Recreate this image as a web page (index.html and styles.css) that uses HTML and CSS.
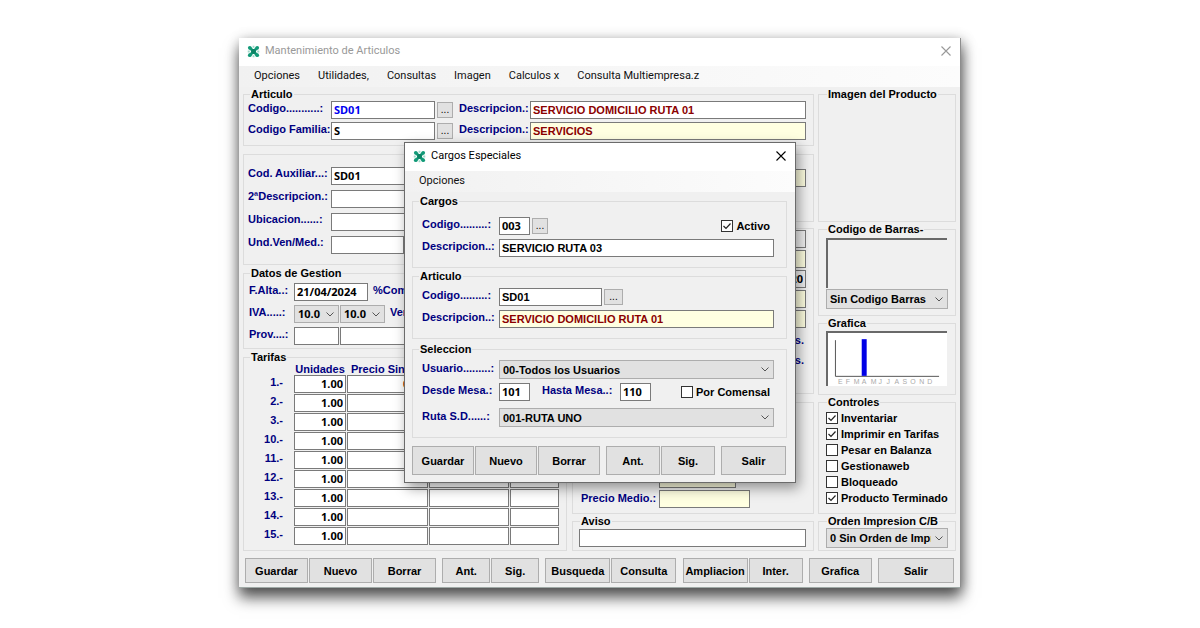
FILE: index.html
```html
<!DOCTYPE html>
<html lang="es">
<head>
<meta charset="utf-8">
<title>Mantenimiento de Articulos</title>
<link rel="stylesheet" href="styles.css">
</head>
<body>
<svg width="0" height="0" class="defs" aria-hidden="true">
  <symbol id="logo" viewBox="0 0 14 14">
    <path d="M3 3L11 11M11 3L3 11" stroke="#129a78" stroke-width="3"/>
    <path d="M7 0.8V3M7 11V13.2M0.8 7H3M11 7H13.2" stroke="#9fd9c9" stroke-width="2"/>
    <circle cx="3" cy="3" r="2" fill="#129a78"/><circle cx="11" cy="3" r="2" fill="#129a78"/>
    <circle cx="3" cy="11" r="2" fill="#129a78"/><circle cx="11" cy="11" r="2" fill="#129a78"/>
    <circle cx="7" cy="7" r="2.6" fill="#0c8264"/>
  </symbol>
  <symbol id="close" viewBox="0 0 10 10">
    <path d="M0.5 0.5L9.5 9.5M9.5 0.5L0.5 9.5" stroke="currentColor" stroke-width="1.1" fill="none"/>
  </symbol>
</svg>
<main class="window">
  <header class="titlebar inactive">
    <svg class="logo"><use href="#logo"/></svg>
    <h1>Mantenimiento de Articulos</h1>
    <button class="close" aria-label="Cerrar"><svg><use href="#close"/></svg></button>
  </header>
  <nav class="menu">
    <a href="#">Opciones</a><a href="#">Utilidades,</a><a href="#">Consultas</a><a href="#">Imagen</a><a href="#">Calculos x</a><a href="#">Consulta Multiempresa.z</a>
  </nav>
  <div class="content">
    <div class="center">
      <fieldset class="article">
        <legend>Articulo</legend>
        <label for="cod">Codigo...........:</label><input class="code blue" id="cod" value="SD01"><button class="more">...</button><label for="desc">Descripcion.:</label><input class="red" id="desc" value="SERVICIO DOMICILIO RUTA 01">
        <label for="fam">Codigo Familia:</label><input class="code" id="fam" value="S"><button class="more">...</button><label for="fdesc">Descripcion.:</label><input class="red yellow" id="fdesc" value="SERVICIOS">
      </fieldset>
      <div class="halves">
        <div class="stack">
          <fieldset class="aux">
            <label for="aux">Cod. Auxiliar...:</label><input class="code" id="aux" value="SD01">
            <label for="d2">2ªDescripcion.:</label><input id="d2">
            <label for="ubi">Ubicacion......:</label><input id="ubi">
            <label for="und">Und.Ven/Med.:</label><span class="pair"><input id="und"><input aria-label="Medida"></span>
          </fieldset>
          <fieldset class="gestion">
            <legend>Datos de Gestion</legend>
            <div class="line"><label for="alta">F.Alta..:</label><input class="code date" id="alta" value="21/04/2024"><label class="next">%Comi</label></div>
            <div class="line"><label for="iva">IVA.....:</label><select class="code iva" id="iva"><option>10.0</option></select><select class="code iva" aria-label="IVA 2"><option>10.0</option></select><label class="next">Ver</label></div>
            <div class="line"><label for="prov">Prov....:</label><input class="short" id="prov"><input class="grow" aria-label="Proveedor"></div>
          </fieldset>
          <fieldset class="tarifas">
            <legend>Tarifas</legend>
            <table>
              <colgroup><col class="c0"><col class="c1"><col class="c2"><col class="c3"><col class="c4"></colgroup>
              <thead><tr><th></th><th>Unidades</th><th class="start">Precio Sin</th><th></th><th></th></tr></thead>
              <tbody>
                <tr><th>1.-</th><td><input aria-label="Unidades 1" value="1.00"></td><td><input aria-label="Precio 1" class="price" value="0.00"></td><td><input aria-label="PVP 1"></td><td><input aria-label="Dto 1"></td></tr>
                <tr><th>2.-</th><td><input aria-label="Unidades 2" value="1.00"></td><td><input aria-label="Precio 2"></td><td><input aria-label="PVP 2"></td><td><input aria-label="Dto 2"></td></tr>
                <tr><th>3.-</th><td><input aria-label="Unidades 3" value="1.00"></td><td><input aria-label="Precio 3"></td><td><input aria-label="PVP 3"></td><td><input aria-label="Dto 3"></td></tr>
                <tr><th>10.-</th><td><input aria-label="Unidades 10" value="1.00"></td><td><input aria-label="Precio 10"></td><td><input aria-label="PVP 10"></td><td><input aria-label="Dto 10"></td></tr>
                <tr><th>11.-</th><td><input aria-label="Unidades 11" value="1.00"></td><td><input aria-label="Precio 11"></td><td><input aria-label="PVP 11"></td><td><input aria-label="Dto 11"></td></tr>
                <tr><th>12.-</th><td><input aria-label="Unidades 12" value="1.00"></td><td><input aria-label="Precio 12"></td><td><input aria-label="PVP 12"></td><td><input aria-label="Dto 12"></td></tr>
                <tr><th>13.-</th><td><input aria-label="Unidades 13" value="1.00"></td><td><input aria-label="Precio 13"></td><td><input aria-label="PVP 13"></td><td><input aria-label="Dto 13"></td></tr>
                <tr><th>14.-</th><td><input aria-label="Unidades 14" value="1.00"></td><td><input aria-label="Precio 14"></td><td><input aria-label="PVP 14"></td><td><input aria-label="Dto 14"></td></tr>
                <tr><th>15.-</th><td><input aria-label="Unidades 15" value="1.00"></td><td><input aria-label="Precio 15"></td><td><input aria-label="PVP 15"></td><td><input aria-label="Dto 15"></td></tr>
              </tbody>
            </table>
          </fieldset>
        </div>
        <div class="stack">
          <fieldset class="stock-top"><input class="yellow" aria-label="Total"></fieldset>
          <fieldset class="stock">
            <input class="plain" aria-label="Stock 1"><input class="yellow" aria-label="Stock 2"><input class="plain code end" aria-label="Stock 3" value="20"><input class="yellow" aria-label="Stock 4"><input class="yellow" aria-label="Stock 5">
            <span>Uds.</span><span>Uds.</span>
          </fieldset>
          <fieldset class="medio">
            <label for="ult">Ultima:</label><input class="yellow code ult" id="ult" value="21/04/2022">
            <label for="pm">Precio Medio.:</label><input class="yellow" id="pm">
          </fieldset>
          <fieldset class="aviso"><legend>Aviso</legend><input aria-label="Aviso"></fieldset>
        </div>
      </div>
    </div>
    <aside class="side">
      <fieldset class="image"><legend>Imagen del Producto</legend></fieldset>
      <fieldset class="barcode"><legend>Codigo de Barras-</legend>
        <div class="sunken"></div>
        <select aria-label="Codigo de Barras"><option>Sin Codigo Barras</option></select>
      </fieldset>
      <fieldset class="chart"><legend>Grafica</legend>
        <div class="sunken white">
          <svg viewBox="0 0 120 53" role="img" aria-label="Ventas por mes">
            <path d="M7.5 7V43.5H112" fill="none" stroke="#555"/>
            <rect x="34" y="6" width="5" height="37" fill="#0000e6"/>
            <g class="months"><text x="10">E</text><text x="18">F</text><text x="26">M</text><text x="34">A</text><text x="43">M</text><text x="51">J</text><text x="59">J</text><text x="67">A</text><text x="75">S</text><text x="83">O</text><text x="92">N</text><text x="100">D</text></g>
          </svg>
        </div>
      </fieldset>
      <fieldset class="controls"><legend>Controles</legend>
        <label><input type="checkbox" checked>Inventariar</label>
        <label><input type="checkbox" checked>Imprimir en Tarifas</label>
        <label><input type="checkbox">Pesar en Balanza</label>
        <label><input type="checkbox">Gestionaweb</label>
        <label><input type="checkbox">Bloqueado</label>
        <label><input type="checkbox" checked>Producto Terminado</label>
      </fieldset>
      <fieldset class="order"><legend>Orden Impresion C/B</legend>
        <select aria-label="Orden Impresion"><option>0 Sin Orden de Impresion</option></select>
      </fieldset>
    </aside>
  </div>
  <footer class="actions">
    <div><button class="w63">Guardar</button><button class="w63">Nuevo</button><button class="w63">Borrar</button></div>
    <div><button class="w48">Ant.</button><button class="w48">Sig.</button></div>
    <div><button class="w65">Busqueda</button><button class="w65">Consulta</button></div>
    <div><button class="w65">Ampliacion</button><button class="w54">Inter.</button></div>
    <div><button class="w63">Grafica</button></div>
    <div><button class="w76">Salir</button></div>
  </footer>

  <section class="dialog" role="dialog" aria-labelledby="dlg">
    <header class="titlebar">
      <svg class="logo"><use href="#logo"/></svg>
      <h2 id="dlg">Cargos Especiales</h2>
      <button class="close" aria-label="Cerrar"><svg><use href="#close"/></svg></button>
    </header>
    <nav class="menu"><a href="#">Opciones</a></nav>
    <div class="dialog-body">
      <fieldset class="cargos"><legend>Cargos</legend>
        <div class="line"><label for="cc">Codigo.........:</label><input class="code tiny" id="cc" value="003"><button class="more">...</button><label class="check"><input type="checkbox" checked>Activo</label></div>
        <div class="line"><label for="cd">Descripcion..:</label><input class="grow" id="cd" value="SERVICIO RUTA 03"></div>
      </fieldset>
      <fieldset class="art"><legend>Articulo</legend>
        <div class="line"><label for="ac">Codigo.........:</label><input class="mid" id="ac" value="SD01"><button class="more wide">...</button></div>
        <div class="line"><label for="ad">Descripcion..:</label><input class="grow red yellow" id="ad" value="SERVICIO DOMICILIO RUTA 01"></div>
      </fieldset>
      <fieldset class="sel"><legend>Seleccion</legend>
        <div class="line"><label for="us">Usuario.........:</label><select class="grow" id="us"><option>00-Todos los Usuarios</option></select></div>
        <div class="line"><label for="dm">Desde Mesa.:</label><input class="code tiny" id="dm" value="101"><label class="hasta" for="hm">Hasta Mesa..:</label><input class="code tiny" id="hm" value="110"><label class="check"><input type="checkbox">Por Comensal</label></div>
        <div class="line last"><label for="rt">Ruta S.D......:</label><select class="grow" id="rt"><option>001-RUTA UNO</option></select></div>
      </fieldset>
    </div>
    <footer class="actions">
      <div><button class="w63">Guardar</button><button class="w63">Nuevo</button><button class="w63">Borrar</button></div>
      <div><button class="w54">Ant.</button><button class="w54">Sig.</button></div>
      <div><button class="w65">Salir</button></div>
    </footer>
  </section>
</main>
</body>
</html>
```
FILE: styles.css
```css
* { box-sizing: border-box; }
body {
  margin: 0;
  padding: 38px 239px 40px;
  background: #fff;
  color: #000;
  font: bold 11px/12px "Liberation Sans", Arial, sans-serif;
}
.defs { position: absolute; }
.window {
  position: relative;
  display: flex;
  flex-direction: column;
  background: #f0f0f0;
  border-right: 1px solid #8d8d8d;
  border-bottom: 1px solid #9fa9a6;
  box-shadow: 0 10px 14px rgba(0, 0, 0, .6), 2px 2px 12px rgba(0, 0, 0, .3);
}
input, select, button { font: inherit; color: inherit; margin: 0; border-radius: 0; min-width: 0; }

/* Title bars and menus */
.titlebar { display: flex; align-items: center; height: 28px; padding: 0 9px 2px 8px; background: #fff; gap: 5px; }
.titlebar h1, .titlebar h2 { flex: 1; margin: 0; font: 11px/16px Roboto, "Open Sans", sans-serif; }
.inactive { color: #999; }
.logo { width: 13px; height: 13px; }
.close { display: flex; padding: 0; border: 0; background: none; }
.close svg { width: 10px; height: 10px; }
.menu { display: flex; gap: 18px; height: 21px; padding: 0 15px; background: linear-gradient(90deg, #f1f1f1, #fcfcfc); }
.menu a { color: #111; font: 11px/20px Roboto, "Open Sans", sans-serif; text-decoration: none; white-space: nowrap; }

/* Group boxes */
fieldset { min-width: 0; margin: 0; padding: 0 7px 0 5px; border: 1px solid #dcdcdc; }
legend { margin-left: 1px; padding: 0 1px; height: 12px; white-space: nowrap; }
label { color: #000080; white-space: nowrap; }

/* Fields */
input:not([type="checkbox"]) { width: 100%; height: 18px; padding: 0 2px; border: 1px solid #7a7a7a; background: #fff; }
.code { font-family: "Noto Sans", "Open Sans", sans-serif; }
input.code:not([type="checkbox"]), td input:not([type="checkbox"]) { padding-bottom: 2px; }
input.blue { color: #0000f0; }
input.red { color: #8b0000; }
input.yellow:not([type="checkbox"]) { background: #ffffe1; }
input.plain:not([type="checkbox"]) { background: #f0f0f0; }
input.end { text-align: right; }
select {
  appearance: none;
  height: 19px;
  padding: 0 16px 0 3px;
  border: 1px solid #adadad;
  background: #e1e1e1 url("data:image/svg+xml,%3Csvg xmlns='http://www.w3.org/2000/svg' width='8' height='5'%3E%3Cpath d='M.5.5L4 4L7.500.5' fill='none' stroke='%23555'/%3E%3C/svg%3E") no-repeat right 4px center;
}
input[type="checkbox"] { appearance: none; flex: none; width: 12px; height: 12px; border: 1px solid #333; background: #fff; }
input[type="checkbox"]:checked { background: #fff url("data:image/svg+xml,%3Csvg xmlns='http://www.w3.org/2000/svg' width='10' height='10'%3E%3Cpath d='M1.500 5L4 7.500L8.500 2.500' fill='none' stroke='%23222' stroke-width='1.2'/%3E%3C/svg%3E") center no-repeat; }
.more { width: 16px; height: 16px; padding: 0; border: 1px solid #adadad; background: #e1e1e1; font-weight: normal; font-size: 10px; line-height: 12px; }
.line { display: flex; align-items: center; }
.line > label:not(.check), .article label { padding-bottom: 4px; }
.grow { flex: 1; }

.content { display: grid; grid-template-columns: minmax(0, 1fr) 138px; column-gap: 4px; padding: 1px 4px 0; }

.article { display: grid; grid-template-columns: 83px 104px 24px 71px 1fr; row-gap: 3px; align-items: center; padding-top: 1px; padding-bottom: 5px; }
.article, .aux { padding-left: 4px; }
.article legend { margin-left: 2px; }
.article .more { margin-left: 2px; }
.halves { display: grid; grid-template-columns: minmax(0, 324fr) minmax(0, 242fr); column-gap: 5px; margin-top: 8px; }
.stack, .side { display: flex; flex-direction: column; }

.aux { display: grid; grid-template-columns: 83px 1fr; row-gap: 5px; align-items: center; padding-top: 12px; padding-bottom: 10px; }
.aux label { padding-bottom: 6px; }
.pair { display: grid; grid-template-columns: 73px 1fr; column-gap: 1px; }
.gestion { display: flex; flex-direction: column; gap: 4px; margin-top: 2px; padding-top: 4px; padding-bottom: 3px; }
.gestion .line { height: 18px; gap: 1px; }
.gestion label:first-child { width: 44px; }
.gestion .next { margin-left: 4px; }
.gestion input.date { width: 74px; }
.gestion input.short { width: 45px; }
.gestion .line .grow { width: auto; }
.iva { width: 45px; height: 18px; }

.tarifas { flex: 1; margin-top: 2px; padding-right: 6px; }
table { width: 100%; table-layout: fixed; border-spacing: 1px; }
th { padding: 0; height: 10px; color: #000080; line-height: 10px; white-space: nowrap; text-align: center; }
th.start { padding-left: 4px; text-align: left; }
tbody th { height: 18px; padding: 0 10px 3px 0; line-height: 15px; text-align: right; }
td { padding: 0; }
td input { display: block; text-align: right; font-family: "Noto Sans", sans-serif; }
.c0 { width: 43px; }
.c1 { width: 52px; }
.c2 { width: 81px; }
.c3 { width: 80px; }
.price { color: #8b0000; }

.stock-top { height: 68px; padding-top: 14px; padding-left: 86px; }
.stock { display: flex; flex-direction: column; gap: 2px; height: 166px; margin-top: 6px; padding-top: 1px; padding-left: 86px; }
.stock span { align-self: flex-end; padding: 4px 2px 2px; color: #000080; }
.medio { display: grid; grid-template-columns: 78px 91px; row-gap: 2px; align-items: center; margin-top: 8px; padding: 67px 7px 5px 8px; }
.medio label { padding-bottom: 3px; }
.medio input.ult { width: 77px; }
.aviso { margin-top: 1px; padding: 2px 7px 3px 6px; }
.aviso input { display: block; }

.side fieldset { padding: 0 7px; }
.image { height: 134px; }
.side .barcode { margin-top: 1px; padding-top: 3px; padding-bottom: 6px; }
.sunken { height: 50px; margin-right: 1px; border: solid #696969; border-width: 2px 0 0 2px; }
.white { height: 55px; background: #fff; }
.white svg { display: block; width: 100%; height: 53px; }
.months { font: 7px "Liberation Sans", sans-serif; fill: #aaa; }
.months text { transform: translateY(51px); }
.side select { display: block; width: 100%; height: 20px; margin-top: 1px; }
.side .chart { margin-top: 1px; padding-top: 2px; padding-bottom: 8px; }
.side .controls { margin-top: 1px; padding-top: 2px; padding-bottom: 7px; }
.controls label, .check { display: flex; align-items: center; gap: 3px; height: 16px; color: #000; }
.side .order { margin-top: 1px; padding-bottom: 2px; }

/* Button rows */
.actions { display: flex; justify-content: space-between; padding: 7px 6px 4px; }
.actions div { display: flex; gap: 1px; }
.actions button { height: 25px; padding: 0; border: 1px solid #adadad; background: #e1e1e1; }
.actions .w48 { width: 48px; }
.actions .w54 { width: 54px; }
.actions .w63 { width: 63px; }
.actions .w65 { width: 65px; }
.actions .w76 { width: 76px; }

/* Dialog floating over the window */
.dialog {
  position: absolute;
  left: 165px;
  top: 104px;
  width: 392px;
  background: #f0f0f0;
  border: 1px solid #6b6b6b;
  box-shadow: 3px 5px 12px rgba(0, 0, 0, .4);
}
.dialog .menu { padding: 0 14px; }
.dialog-body { padding: 3px 8px 0 7px; }
.dialog fieldset { display: flex; flex-direction: column; gap: 4px; padding: 6px 12px 10px 9px; }
.dialog .cargos { padding-top: 10px; }
.dialog legend { margin-left: -3px; }
.dialog .art { margin-top: 2px; }
.dialog .sel { margin-top: 4px; padding-top: 5px; }
.dialog .line > label:first-child { width: 77px; }
.dialog input.tiny { width: 31px; }
.dialog input.mid { width: 103px; }
.dialog .more { margin-left: 2px; }
.dialog .more.wide { width: 19px; }
.dialog .line .check { margin-left: auto; margin-right: 4px; }
.dialog .hasta { width: 78px; margin-left: 12px; }
.dialog .last { margin-top: 3px; }
.dialog .actions { padding: 8px 9px 7px 7px; }
.dialog .actions button { height: 29px; }
.dialog .actions .w63 { width: 62px; }
```
